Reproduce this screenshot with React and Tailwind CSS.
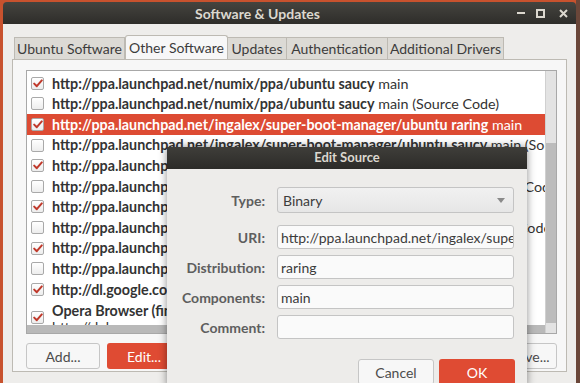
import React from 'react';

const FONT = { fontFamily: 'Lato, "Open Sans", sans-serif' };

const rows = [
    { checked: true, url: 'http://ppa.launchpad.net/numix/ppa/ubuntu saucy', tail: 'main' },
    { checked: false, url: 'http://ppa.launchpad.net/numix/ppa/ubuntu saucy', tail: 'main (Source Code)' },
    { checked: true, url: 'http://ppa.launchpad.net/ingalex/super-boot-manager/ubuntu raring', tail: 'main', selected: true },
    { checked: false, url: 'http://ppa.launchpad.net/ingalex/super-boot-manager/ubuntu saucy', tail: 'main (Source Code)' },
    { checked: true, url: 'http://ppa.launchpad.net/webupd8team/atom/ubuntu saucy', tail: 'main' },
    { checked: false, url: 'http://ppa.launchpad.net/webupd8team/atom/ubuntu saucy', tail: 'main (Source Code)' },
    { checked: true, url: 'http://ppa.launchpad.net/webupd8team/java/ubuntu saucy', tail: 'main' },
    { checked: false, url: 'http://ppa.launchpad.net/webupd8team/java/ubuntu saucy', tail: 'main (Source Code)' },
    { checked: true, url: 'http://ppa.launchpad.net/ubuntu-wine/ppa/ubuntu', tail: 'main' },
    { checked: false, url: 'http://ppa.launchpad.net/ubuntu-wine/ppa/ubuntu', tail: 'main (Source Code)' },
    { checked: true, url: 'http://dl.google.com/linux/chrome/deb/ stable', tail: 'main' },
];

const Check = ({ checked }) => (
    <div className="w-[13px] h-[13px] shrink-0 rounded-[2px] border border-[#a9a9a9] bg-gradient-to-b from-white to-[#ededed] flex items-center justify-center">
        {checked && (
            <svg width="10" height="9" viewBox="0 0 10 9">
                <path d="M1.2 4.6 L3.8 7.2 L8.8 1.4" fill="none" stroke="#c0392b" strokeWidth="2" strokeLinecap="round" strokeLinejoin="round" />
            </svg>
        )}
    </div>
);

const tabs = ['Ubuntu Software', 'Other Software', 'Updates', 'Authentication', 'Additional Drivers'];
const tabWidths = ['w-[111px]', 'w-[103px]', 'w-[60px]', 'w-[102px]', 'w-[117px]'];

const Field = ({ label, children, mt }) => (
    <div className={`flex items-center ${mt}`}>
        <div className="w-[98px] text-right text-[14px] font-bold text-[#5e5e5e] whitespace-nowrap">{label}</div>
        <div className="ml-[12px] w-[237px]">{children}</div>
    </div>
);

const Entry = ({ value }) => (
    <div className="h-[24px] rounded-[3px] border border-[#c4c4c4] bg-[#fafafa] px-[3px] flex items-center text-[14px] text-[#3c3c3c] overflow-hidden whitespace-nowrap">
        {value}
    </div>
);

export default function App() {
    return (
        <div className="relative w-[580px] h-[383px] overflow-hidden bg-[#c8522e] flex pt-[2px] pl-[3px]" style={FONT}>
            {/* main window */}
            <div className="w-[573px] h-[381px] flex flex-col shrink-0">
                <div className="h-[22px] rounded-t-[4px] bg-gradient-to-b from-[#45443f] to-[#2e2d2a] flex items-center relative">
                    <div className="pl-[192px] text-[14px] font-bold text-[#dcd8cf]">Software &amp; Updates</div>
                    <div className="ml-auto flex items-center gap-[11px] pr-[8px] text-[#dcd8cf]">
                        <div className="w-[8px] h-[2px] bg-[#dcd8cf]" />
                        <div className="w-[9px] h-[9px] border-2 border-[#dcd8cf]" />
                        <svg width="9" height="9" viewBox="0 0 9 9" className="ml-[3px]">
                            <path d="M1 1 L8 8 M8 1 L1 8" stroke="#dcd8cf" strokeWidth="2" />
                        </svg>
                    </div>
                </div>
                <div className="flex-1 bg-[#eeedeb] pt-[11px] px-[9px]">
                    {/* tabs */}
                    <div className="flex items-end h-[24px] pl-[3px]">
                        {tabs.map((t, i) => (
                            <div
                                key={t}
                                className={`${tabWidths[i]} flex items-center justify-center whitespace-nowrap text-[14px] text-[#3c3c3c] border border-[#bdbab3] border-b-0 ${i === 1 ? 'h-[24px] bg-[#f7f7f7] rounded-t-[3px]' : 'h-[22px] bg-[#dcdad5] -ml-px'}`}
                            >
                                {t}
                            </div>
                        ))}
                    </div>
                    {/* notebook page */}
                    <div className="h-[313px] border border-[#bdbab3] bg-[#f7f7f7] pt-[10px] pl-[13px] pr-[9px] flex flex-col">
                        <div className="h-[264px] border border-[#a8a8a8] bg-white flex">
                            <div className="flex-1 flex flex-col min-w-0">
                                <div className="flex-1 overflow-hidden pt-[2px]">
                                    {rows.map((r, i) => (
                                        <div
                                            key={i}
                                            className={`h-[20.6px] flex items-center pl-[4px] gap-[8px] whitespace-nowrap text-[14.3px] ${r.selected ? 'bg-[#dd4b33] text-white' : 'text-[#333333]'}`}
                                        >
                                            <Check checked={r.checked} />
                                            <span>
                                                <span className="font-bold">{r.url}</span> {r.tail}
                                            </span>
                                        </div>
                                    ))}
                                    <div className="flex pl-[4px] gap-[8px] pt-[3px] text-[14.3px] text-[#333333] whitespace-nowrap">
                                        <div className="pt-[8px]">
                                            <Check checked />
                                        </div>
                                        <div className="leading-[16px]">
                                            <div className="font-bold">Opera Browser (finest browser)</div>
                                            <div>http://deb.opera.com/opera/ stable non-free</div>
                                        </div>
                                    </div>
                                </div>
                                <div className="h-[8px] bg-[#b9b9b9] shrink-0" />
                            </div>
                            <div className="w-[11px] flex flex-col bg-[#e3e3e3] border-l border-[#d0d0d0]">
                                <div className="h-[72px]" />
                                <div className="flex-1 bg-[#bcbcbc] mb-[10px]" />
                            </div>
                        </div>
                        <div className="mt-[9px] h-[26px] flex gap-[7px]">
                            <div className="w-[74px] rounded-[3px] border border-[#c6c6c6] bg-[#f7f7f7] flex items-center justify-center text-[14px] text-[#4c4c4c]">Add...</div>
                            <div className="w-[74px] rounded-[3px] bg-[#df4b33] flex items-center justify-center text-[14px] text-white">Edit...</div>
                            <div className="ml-auto w-[74px] rounded-[3px] border border-[#c6c6c6] bg-[#f7f7f7] flex items-center justify-center text-[14px] text-[#4c4c4c]">Remove...</div>
                        </div>
                    </div>
                </div>
            </div>
            <div className="w-[4px] -mt-[2px] bg-[#6a4639]" />

            {/* Edit Source dialog */}
            <div className="absolute left-[167px] top-[147px] w-[360px] h-[240px] flex flex-col shadow-[0_0_8px_rgba(0,0,0,0.45)]">
                <div className="h-[22px] bg-gradient-to-b from-[#3f3e3a] to-[#2c2b28] flex items-center justify-center text-[13px] font-bold text-[#dcd8cf]">
                    Edit Source
                </div>
                <div className="flex-1 bg-[#edecea] pt-[18px] flex flex-col">
                    <Field label="Type:">
                        <div className="h-[26px] rounded-[3px] border border-[#c4c4c4] bg-gradient-to-b from-[#f1f1f1] to-[#e6e6e6] px-[5px] flex items-center text-[14px] text-[#3c3c3c]">
                            Binary
                            <svg width="8" height="5" viewBox="0 0 8 5" className="ml-auto mr-[3px]">
                                <path d="M0 0 L8 0 L4 5 Z" fill="#8a8a8a" />
                            </svg>
                        </div>
                    </Field>
                    <Field label="URI:" mt="mt-[12px]">
                        <Entry value="http://ppa.launchpad.net/ingalex/super-boot-manager/ubuntu" />
                    </Field>
                    <Field label="Distribution:" mt="mt-[6px]">
                        <Entry value="raring" />
                    </Field>
                    <Field label="Components:" mt="mt-[6px]">
                        <Entry value="main" />
                    </Field>
                    <Field label="Comment:" mt="mt-[6px]">
                        <Entry value="" />
                    </Field>
                    <div className="mt-[20px] flex justify-end gap-[5px] pr-[12px]">
                        <div className="w-[76px] h-[26px] rounded-[3px] border border-[#c6c6c6] bg-[#f7f7f7] flex items-center justify-center text-[14px] text-[#4c4c4c]">Cancel</div>
                        <div className="w-[76px] h-[26px] rounded-[3px] bg-[#df4b33] flex items-center justify-center text-[14px] text-white">OK</div>
                    </div>
                </div>
            </div>
        </div>
    );
}
